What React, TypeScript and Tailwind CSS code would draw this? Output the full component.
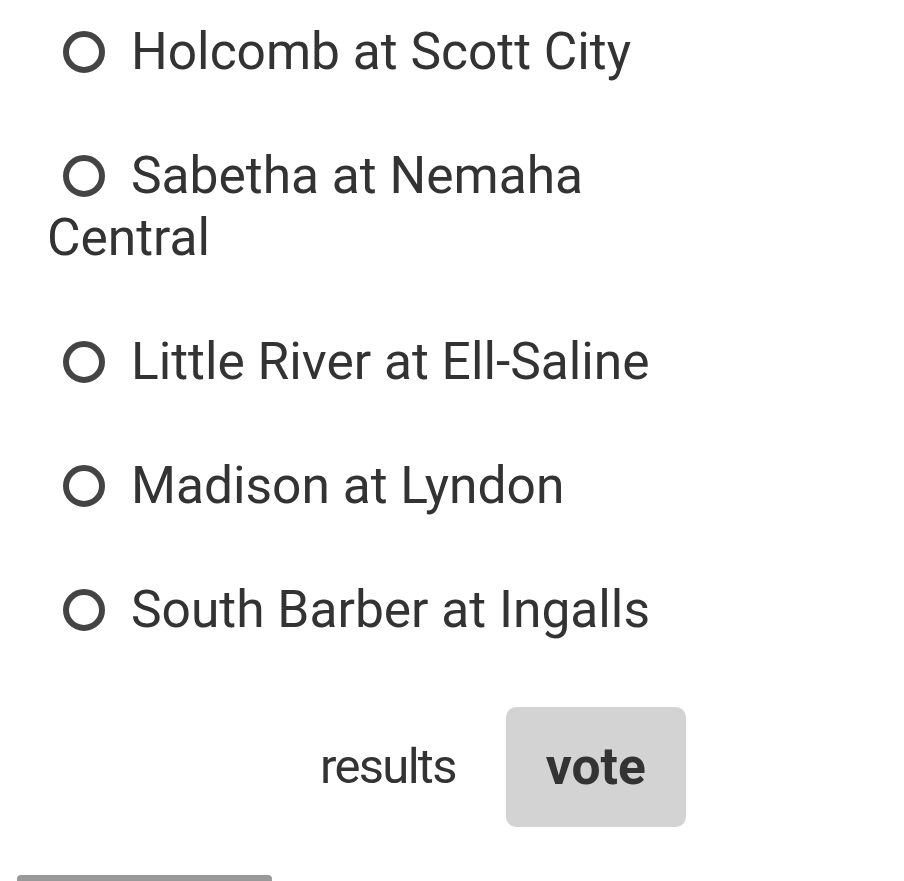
const options = [
  'Holcomb at Scott City',
  'Sabetha at Nemaha Central',
  'Little River at Ell-Saline',
  'Madison at Lyndon',
  'South Barber at Ingalls',
];

export default function App() {
  return (
    <div
      className="w-[904px] h-[881px] overflow-hidden bg-white text-[#333] flex flex-col"
      style={{ fontFamily: 'Roboto, "Noto Sans", sans-serif' }}
    >
      {/* Poll options */}
      <div className="pl-[47px] pt-[21px] w-[700px] flex flex-col gap-[62px]">
        {options.map((opt) => (
          <label key={opt} className="block text-[51.5px] leading-[62px]">
            <span className="inline-block align-middle ml-[16px] mr-[26px] w-[42px] h-[42px] rounded-full border-[6px] border-[#444] relative -top-[3px]" />
            {opt}
          </label>
        ))}
      </div>

      {/* Actions */}
      <div className="flex items-center mt-[66px] pl-[320px]">
        <button className="text-[49px] tracking-[-1.7px] leading-[62px] text-[#333]">results</button>
        <button className="ml-[50px] w-[180px] h-[120px] rounded-[10px] bg-[#d3d3d3] text-[51.5px] font-bold text-[#333]">
          vote
        </button>
      </div>

      <div className="mt-auto ml-[17px] w-[255px] h-[6px] rounded-t-[4px] bg-[#999]" />
    </div>
  );
}
